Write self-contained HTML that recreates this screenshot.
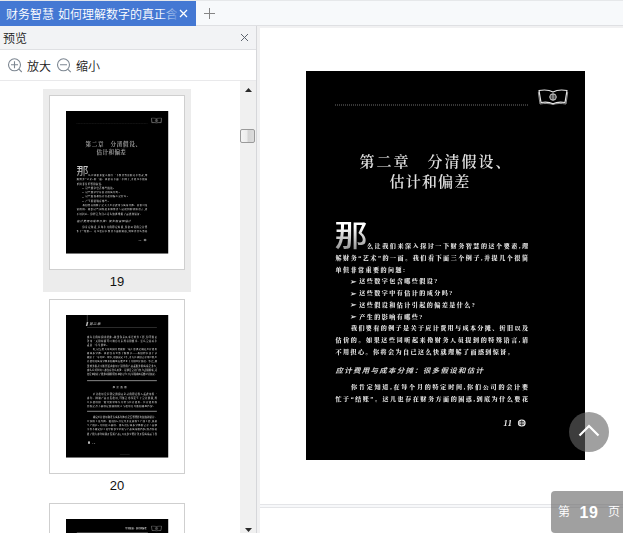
<!DOCTYPE html>
<html lang="zh-CN">
<head>
<meta charset="utf-8">
<title>财务智慧 如何理解数字的真正含义</title>
<style>
*{box-sizing:border-box;margin:0;padding:0}
html,body{width:623px;height:533px;overflow:hidden;background:#fff}
body{position:relative;font-family:"Liberation Sans","Noto Sans CJK SC",sans-serif;font-size:12px;color:#222;font-weight:350}
.abs{position:absolute}
/* tab bar */
#tabbar{position:absolute;left:0;top:0;width:623px;height:26px;background:#f7f9fb;border-bottom:1px solid #dfe0e3;border-top:1px solid #e6e8ea}
#tab{position:absolute;left:0;top:0;width:196px;height:25px;background:#4478d3;color:#fff}
#tab .t{position:absolute;left:6px;top:1px;width:171px;height:24px;line-height:26px;white-space:nowrap;overflow:hidden;font-size:12px;word-spacing:0.6px}
#tab .fade{position:absolute;left:160px;top:0;width:18px;height:25px;background:linear-gradient(to right,rgba(68,120,211,0),rgba(68,120,211,.85))}
/* sidebar */
#side{position:absolute;left:0;top:26px;width:257px;height:507px;background:#fff;border-right:1px solid #d6d7da}
#shead{position:absolute;left:0;top:0;width:256px;height:24px;background:#f2f3f5;border-bottom:1px solid #dfe0e3}
#shead .t{position:absolute;left:3px;top:1px;line-height:24px;font-size:12px;color:#1a1a1a}
#stool{position:absolute;left:0;top:24px;width:256px;height:31px;border-bottom:1px solid #e9e9eb}
#stool .t{position:absolute;top:2px;line-height:31px;font-size:12px;color:#222}
#split{position:absolute;left:257px;top:26px;width:3px;height:507px;background:#f1f1f2}
#maintop{position:absolute;left:260px;top:26px;width:363px;height:2px;background:#f1f1f2}
/* thumbs */
.item{position:absolute;left:43px;width:148px;height:203px}
.item.sel{background:#ececec}
.item .box{position:absolute;left:6px;top:6px;width:136px;height:175px;background:#fff;border:1px solid #cfcfcf;overflow:hidden}
.item .num{position:absolute;left:0;width:148px;top:181px;height:22px;line-height:23px;text-align:center;font-size:13px;color:#111;font-weight:400}
/* scrollbar */
#sb{position:absolute;left:240px;top:55px;width:16px;height:452px;background:#f0f0f0}
#sbthumb{position:absolute;left:0;top:47.5px;width:15px;height:14.5px;border:1px solid #9a9a9a;border-radius:2px;background:linear-gradient(to right,#f4f4f4 0%,#ececec 45%,#d4d4d4 55%,#dcdcdc 100%)}
/* book page (2x design) */
.pg{position:absolute;width:558px;height:778px;background:#000;transform-origin:0 0;color:#e9e9e9;font-family:"Liberation Serif","Noto Serif CJK SC",serif;overflow:hidden}
.pg.main{left:306px;top:71px;transform:scale(.5)}
.pg .in{position:absolute;left:1px;top:0;width:557px;height:778px}
.pg.main .in{filter:blur(1px)}
.pg.th .in{opacity:.78}
.pg.th{left:16.2px;top:15px;transform:scale(.1832);filter:blur(.7px)}
.pg .ln{position:absolute;height:20px;line-height:20px;font-size:12.2px;font-weight:900;letter-spacing:2.8px;white-space:nowrap;color:#e4e4e4;margin-top:.8px;transform:scaleY(.9);transform-origin:0 68%}
.pg .j{text-align:justify;text-align-last:justify;letter-spacing:0}
.pg .ttl{position:absolute;font-size:30px;line-height:36px;height:36px;letter-spacing:4px;white-space:nowrap;font-weight:600;color:#e0e0e0}
.pg .hd{position:absolute;font-family:"Liberation Sans","Noto Sans CJK SC",sans-serif;font-style:italic;font-weight:700;font-size:15px;letter-spacing:2.5px;height:22px;line-height:22px;white-space:nowrap;color:#d4d4d4;transform:scaleY(.92);transform-origin:0 60%}
.pg .big{position:absolute;font-family:"Liberation Sans","Noto Sans CJK SC",sans-serif;font-size:59px;line-height:60px;font-weight:500;transform:scaleX(1.12);transform-origin:0 0;color:#cfcfcf;background:linear-gradient(to bottom,#fff 20%,#9a9a9a 90%);-webkit-background-clip:text;background-clip:text;-webkit-text-fill-color:transparent}
.pg .dot{position:absolute;height:0;border-top:2px dotted #6e6e6e}
.pg .rule{position:absolute;height:5px;background:#bdbdbd}
/* floating */
#totop{position:absolute;left:569px;top:412px;width:40px;height:40px;border-radius:50%;background:rgba(100,100,100,.61)}
#pind{position:absolute;left:551px;top:491px;width:72px;height:42px;border-radius:4px 0 0 4px;background:rgba(100,100,100,.61);color:#fff}
#pind span{position:absolute;top:0;line-height:43.5px}
.sep{position:absolute;left:260px;width:363px;height:1px;background:#e6e7ea}
</style>
</head>
<body>
<div id="tabbar">
  <div id="tab"><div class="t">财务智慧 如何理解数字的真正含义</div><div class="fade"></div>
    <svg class="abs" style="left:179px;top:8px" width="9" height="9" viewBox="0 0 9 9"><path d="M1 1 L8 8 M8 1 L1 8" stroke="#fff" stroke-width="1.3" fill="none"/></svg>
  </div>
  <svg class="abs" style="left:203px;top:6px" width="13" height="13" viewBox="0 0 13 13"><path d="M6.5 1 V12 M1 6.5 H12" stroke="#858585" stroke-width="1" fill="none"/></svg>
</div>

<div id="side">
  <div id="shead"><div class="t">预览</div>
    <svg class="abs" style="left:240px;top:7px" width="9" height="9" viewBox="0 0 9 9"><path d="M1 1 L8 8 M8 1 L1 8" stroke="#5d646e" stroke-width="1" fill="none"/></svg>
  </div>
  <div id="stool">
    <svg class="abs" style="left:7px;top:7.6px" width="17" height="17" viewBox="0 0 17 17"><circle cx="7.5" cy="6.8" r="6" stroke="#7d8792" stroke-width="1.1" fill="none"/><path d="M4 6.8 H11 M7.5 3.3 V10.3 M11.9 11.2 L14.8 14" stroke="#7d8792" stroke-width="1.1" fill="none"/></svg>
    <div class="t" style="left:27px">放大</div>
    <svg class="abs" style="left:56px;top:7.6px" width="17" height="17" viewBox="0 0 17 17"><circle cx="7.5" cy="6.8" r="6" stroke="#7d8792" stroke-width="1.1" fill="none"/><path d="M4 6.8 H11 M11.9 11.3 L14.8 14.2" stroke="#7d8792" stroke-width="1.1" fill="none"/></svg>
    <div class="t" style="left:76px">缩小</div>
  </div>
  <div id="list" class="abs" style="left:0;top:55px;width:256px;height:452px;overflow:hidden">
    <div class="item sel" style="top:8px"><div class="box"><div class="pg th"><div class="in">
<div class="dot" style="left:57px;top:67px;width:386px"></div>
<svg class="abs" style="left:462px;top:36px" width="62" height="32" viewBox="0 0 62 32"><path d="M3 3 C12 1.5 24 2 31 6 C38 2 50 1.5 59 3 L55 27 C46 25.5 38 26 31 29.5 C24 26 16 25.500 7 27 Z" stroke="#e6e6e6" stroke-width="2.4" fill="none" stroke-linejoin="round"/><path d="M1.500 6 L5 30 C14 28.500 24 28.500 31 31 C38 28.500 48 28.500 57 30 L60.500 6" stroke="#cfcfcf" stroke-width="1.400" fill="none"/><circle cx="31" cy="16" r="6.500" stroke="#e6e6e6" stroke-width="1.800" fill="none"/><path d="M31 9.500 V22.500 M24.500 16 H37.500 M27 12 H35 M27 20 H35" stroke="#e6e6e6" stroke-width="1.300" fill="none"/></svg>
<div class="ttl" style="left:106px;top:164px">第二章　分清假设、</div>
<div class="ttl" style="left:166px;top:204px;letter-spacing:2.4px">估计和偏差</div>
<div class="big" style="left:56px;top:300px">那</div>
<div class="ln j" style="left:121px;top:340px;width:322px">么让我们来深入探讨一下财务智慧的这个要素,理</div>
<div class="ln j" style="left:58px;top:363.5px;width:385px">解财务“艺术”的一面。我们看下面三个例子,并提几个很简</div>
<div class="ln" style="left:58px;top:387px">单但非常重要的问题:</div>
<div class="ln" style="font-size:15px;left:87px;top:410.5px">➢</div><div class="ln" style="left:105.500px;top:410.5px">这些数字包含哪些假设?</div>
<div class="ln" style="font-size:15px;left:87px;top:434px">➢</div><div class="ln" style="left:105.500px;top:434px">这些数字中有估计的成分吗?</div>
<div class="ln" style="font-size:15px;left:87px;top:457.5px">➢</div><div class="ln" style="left:105.500px;top:457.5px">这些假设和估计引起的偏差是什么?</div>
<div class="ln" style="font-size:15px;left:87px;top:481px">➢</div><div class="ln" style="left:105.500px;top:481px">产生的影响有哪些?</div>
<div class="ln j" style="left:89px;top:504.5px;width:354px">我们要看的例子是关于应计费用与成本分摊、折旧以及</div>
<div class="ln j" style="left:58px;top:528px;width:385px">估价的。如果这些词听起来像财务人员提到的特殊语言,请</div>
<div class="ln" style="left:58px;top:551.5px">不用担心。你将会为自己这么快就理解了而感到惊讶。</div>
<div class="hd" style="left:58px;top:588px">应计费用与成本分摊：很多假设和估计</div>
<div class="ln j" style="left:89px;top:622px;width:354px">你肯定知道,在每个月的特定时间,你们公司的会计要</div>
<div class="ln j" style="left:58px;top:646.5px;width:385px">忙于“结账”。这儿也存在财务方面的困惑,到底为什么要花</div>
<div class="ln" style="left:394px;top:694.500px;font-style:italic;font-size:17px;letter-spacing:1px">11</div>
<svg class="abs" style="left:422px;top:696px" width="17" height="16" viewBox="0 0 17 16"><ellipse cx="8.500" cy="8" rx="7.800" ry="7.200" fill="#e9e9e9"/><path d="M8.500 2 V14 M2.500 8 H14.500 M4 5 H13 M4 11 H13" stroke="#000" stroke-width="1.200" fill="none"/></svg>
</div></div></div><div class="num">19</div></div>
    <div class="item" style="top:212px"><div class="box"><div class="pg th"><div class="in">
<div class="abs" style="left:113px;top:0;width:3px;height:42px;background:#888"></div>
<div class="abs" style="left:110px;top:38px;width:8px;height:22px;background:#eee;transform:skewX(-14deg)"></div>
<div class="hd" style="left:126px;top:39px;font-size:19px;letter-spacing:2px">第二章</div>
<div class="abs" style="left:114px;top:66px;width:381px;height:2px;background:#9a9a9a"></div>
<div class="ln j" style="left:114px;top:108px;width:381px">那么长的时间来结账?如果你未从事过财务工作,你可能认</div>
<div class="ln j" style="left:114px;top:130.500px;width:381px">为用一天的时间可以加总月末所有的数字。怎么会花两个</div>
<div class="ln" style="left:114px;top:153px">或者三个星期呢?</div>
<div class="ln j" style="left:146px;top:176px;width:349px">好,这需要大量时间并要做的一项工作就是确定应计费用</div>
<div class="ln j" style="left:114px;top:198.700px;width:381px">和成本分摊。我们没有必要了解细节——我们将在第十章</div>
<div class="ln j" style="left:114px;top:221.400px;width:381px">和第十一章讨论。现在,请阅读定义栏,并关注我们会计用应收应</div>
<div class="ln j" style="left:114px;top:244.100px;width:381px">计费用及成本分摊来精确地反映企业当月的经营状况。毕竟,如</div>
<div class="ln j" style="left:114px;top:266.800px;width:381px">果财务报表不能告诉我们用于销售的产品或服务的成本是多少,</div>
<div class="ln j" style="left:114px;top:289.500px;width:381px">那么它对任何人都没有什么用处。这就是会计门努力去做的事,这</div>
<div class="ln j" style="left:114px;top:312.200px;width:381px">也是他们花了很多时间的原因:他们尽力于尽量精确地反映经营状况。</div>
<div class="rule" style="left:114px;top:356px;width:381px"></div>
<div class="ln" style="left:254px;top:384.500px;letter-spacing:9px;font-family:'Liberation Sans','Noto Sans CJK SC',sans-serif">应计费用</div>
<div class="ln j" style="left:146px;top:420px;width:349px">应计费用是在特定期间内记录的特定收入或费用的一</div>
<div class="ln j" style="left:114px;top:443px;width:381px">部分。例如产品开发费用,可能会连续发生于会计期间,所</div>
<div class="ln j" style="left:114px;top:466px;width:381px">以在费用的一般分期里每个月将与应计费用。应计费用的</div>
<div class="ln" style="left:114px;top:489px">目的是为了使特定期间的收入与费用尽可能精确地匹配。</div>
<div class="rule" style="left:114px;top:523px;width:381px"></div>
<div class="ln j" style="left:146px;top:546px;width:349px">确定应计费用和进行成本分摊总是需要要作出假设和估计。</div>
<div class="ln j" style="left:114px;top:569px;width:381px">以你的工资为例。假设你6月是为开发新的生产线工作,该新</div>
<div class="ln j" style="left:114px;top:591.600px;width:381px">生产线在7月份投入使用。那么进行成本分摊的会计人员就</div>
<div class="ln j" style="left:114px;top:614px;width:381px">不得不确定你工资中的多少应该与产品成本相匹配(因为你花</div>
<div class="ln j" style="left:114px;top:638px;width:381px">费了很大部分时间开发新产品),以及多少要计为开发成本而当作</div>
<div class="abs" style="left:119px;top:690px;width:11px;height:13px;background:#eee"></div>
<div class="ln" style="left:142px;top:687px;font-style:italic;font-size:13px">12</div>
<div class="abs" style="left:293px;top:759px;width:54px;height:2px;background:#555"></div>
</div></div></div><div class="num">20</div></div>
    <div class="item" style="top:416px"><div class="box"><div class="pg th"><div class="in">
<div class="ln" style="left:323px;top:42px;font-size:11px;letter-spacing:.6px;font-family:'Liberation Sans','Noto Sans CJK SC',sans-serif">分清假设、估计和偏差</div>
<svg class="abs" style="left:462px;top:36px" width="62" height="32" viewBox="0 0 62 32"><path d="M3 3 C12 1.5 24 2 31 6 C38 2 50 1.5 59 3 L55 27 C46 25.5 38 26 31 29.5 C24 26 16 25.500 7 27 Z" stroke="#e6e6e6" stroke-width="2.4" fill="none" stroke-linejoin="round"/><circle cx="31" cy="16" r="6.500" stroke="#e6e6e6" stroke-width="1.800" fill="none"/><path d="M31 9.500 V22.500 M24.500 16 H37.500" stroke="#e6e6e6" stroke-width="1.300" fill="none"/></svg>
<div class="abs" style="left:58px;top:71px;width:388px;height:3px;background:#999"></div>
<div class="ln j" style="left:58px;top:108px;width:385px">费。类似地,成本分摊也存在很多假设和估计,会计人员</div>
</div></div></div><div class="num">21</div></div>
  </div>
  <div id="sb">
    <svg class="abs" style="left:4.500px;top:7px" width="7" height="4" viewBox="0 0 7 4"><path d="M0 4 L3.500 0 L7 4 Z" fill="#2a2a2a"/></svg>
    <div id="sbthumb"></div>
    <svg class="abs" style="left:4.500px;top:447px" width="7" height="4" viewBox="0 0 7 4"><path d="M0 0 L3.500 4 L7 0 Z" fill="#2a2a2a"/></svg>
  </div>
</div>
<div id="split"></div>
<div id="maintop"></div>

<div class="pg main"><div class="in">
<div class="dot" style="left:57px;top:67px;width:386px"></div>
<svg class="abs" style="left:462px;top:36px" width="62" height="32" viewBox="0 0 62 32"><path d="M3 3 C12 1.5 24 2 31 6 C38 2 50 1.5 59 3 L55 27 C46 25.5 38 26 31 29.5 C24 26 16 25.500 7 27 Z" stroke="#e6e6e6" stroke-width="2.4" fill="none" stroke-linejoin="round"/><path d="M1.500 6 L5 30 C14 28.500 24 28.500 31 31 C38 28.500 48 28.500 57 30 L60.500 6" stroke="#cfcfcf" stroke-width="1.400" fill="none"/><circle cx="31" cy="16" r="6.500" stroke="#e6e6e6" stroke-width="1.800" fill="none"/><path d="M31 9.500 V22.500 M24.500 16 H37.500 M27 12 H35 M27 20 H35" stroke="#e6e6e6" stroke-width="1.300" fill="none"/></svg>
<div class="ttl" style="left:106px;top:164px">第二章　分清假设、</div>
<div class="ttl" style="left:166px;top:204px;letter-spacing:2.4px">估计和偏差</div>
<div class="big" style="left:56px;top:300px">那</div>
<div class="ln j" style="left:121px;top:340px;width:322px">么让我们来深入探讨一下财务智慧的这个要素,理</div>
<div class="ln j" style="left:58px;top:363.5px;width:385px">解财务“艺术”的一面。我们看下面三个例子,并提几个很简</div>
<div class="ln" style="left:58px;top:387px">单但非常重要的问题:</div>
<div class="ln" style="font-size:15px;left:87px;top:410.5px">➢</div><div class="ln" style="left:105.500px;top:410.5px">这些数字包含哪些假设?</div>
<div class="ln" style="font-size:15px;left:87px;top:434px">➢</div><div class="ln" style="left:105.500px;top:434px">这些数字中有估计的成分吗?</div>
<div class="ln" style="font-size:15px;left:87px;top:457.5px">➢</div><div class="ln" style="left:105.500px;top:457.5px">这些假设和估计引起的偏差是什么?</div>
<div class="ln" style="font-size:15px;left:87px;top:481px">➢</div><div class="ln" style="left:105.500px;top:481px">产生的影响有哪些?</div>
<div class="ln j" style="left:89px;top:504.5px;width:354px">我们要看的例子是关于应计费用与成本分摊、折旧以及</div>
<div class="ln j" style="left:58px;top:528px;width:385px">估价的。如果这些词听起来像财务人员提到的特殊语言,请</div>
<div class="ln" style="left:58px;top:551.5px">不用担心。你将会为自己这么快就理解了而感到惊讶。</div>
<div class="hd" style="left:58px;top:588px">应计费用与成本分摊：很多假设和估计</div>
<div class="ln j" style="left:89px;top:622px;width:354px">你肯定知道,在每个月的特定时间,你们公司的会计要</div>
<div class="ln j" style="left:58px;top:646.5px;width:385px">忙于“结账”。这儿也存在财务方面的困惑,到底为什么要花</div>
<div class="ln" style="left:394px;top:694.500px;font-style:italic;font-size:17px;letter-spacing:1px">11</div>
<svg class="abs" style="left:422px;top:696px" width="17" height="16" viewBox="0 0 17 16"><ellipse cx="8.500" cy="8" rx="7.800" ry="7.200" fill="#e9e9e9"/><path d="M8.500 2 V14 M2.500 8 H14.500 M4 5 H13 M4 11 H13" stroke="#000" stroke-width="1.200" fill="none"/></svg>
</div></div>

<div class="sep" style="top:504px;height:4px;background:#f7f8fa;border-top:1px solid #e4e5e8;border-bottom:1px solid #e4e5e8"></div>

<div id="totop"><svg class="abs" style="left:0;top:0" width="40" height="40" viewBox="0 0 40 40"><path d="M10.5 23.5 L20 14 L29.5 23.5" stroke="#fff" stroke-width="2.2" fill="none"/></svg></div>
<div id="pind"><span style="left:7px;font-size:12px">第</span><span style="left:28.5px;font-size:16px;font-weight:700;letter-spacing:.5px">19</span><span style="left:57px;font-size:12px">页</span></div>
</body>
</html>
